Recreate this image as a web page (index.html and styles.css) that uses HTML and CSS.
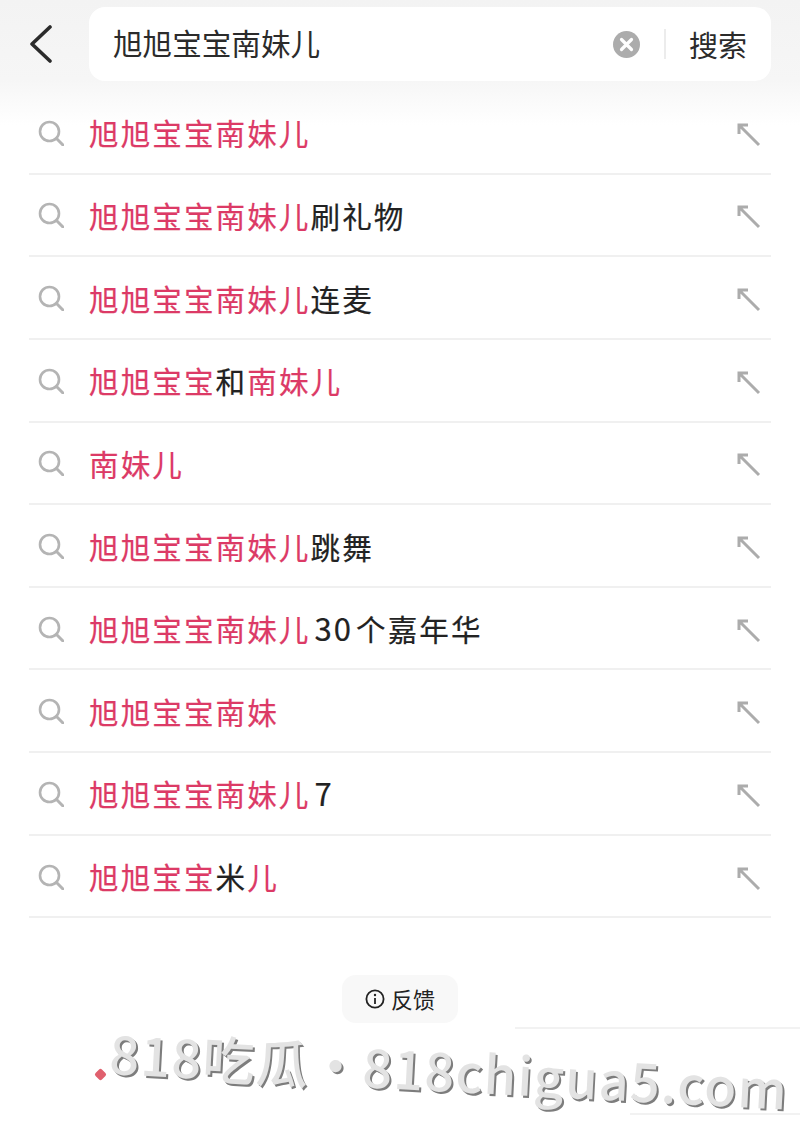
FILE: index.html
```html
<!DOCTYPE html>
<html lang="zh-CN">
<head>
  <meta charset="UTF-8" />
  <title>搜索</title>
  <link rel="stylesheet" href="styles.css">
</head>
<body>
  <svg width="0" height="0" class="defs">
    <symbol id="icon-search" viewBox="0 0 26 26">
      <circle cx="11.5" cy="11.5" r="9.5" fill="none" stroke="currentColor" stroke-width="2.6"/>
      <path d="M18.5 18.5L25 25" fill="none" stroke="currentColor" stroke-width="3" stroke-linecap="round"/>
    </symbol>
    <symbol id="icon-fill" viewBox="0 0 24 24">
      <path d="M2 11V2H11M2 2L22 22" fill="none" stroke="currentColor" stroke-width="3"/>
    </symbol>
  </svg>

  <header class="top-bar">
    <svg class="back" width="24" height="38" viewBox="0 0 24 38">
      <path d="M21 2L3 19L21 36" fill="none" stroke="#2b2b2b" stroke-width="3.6" stroke-linecap="round" stroke-linejoin="round"/>
    </svg>
    <div class="search-box">
      <span class="query">旭旭宝宝南妹儿</span>
      <svg class="clear" width="27" height="27" viewBox="0 0 27 27">
        <circle cx="13.5" cy="13.5" r="13.5" fill="#acacac"/>
        <path d="M8.5 8.5L18.5 18.5M18.5 8.5L8.5 18.5" stroke="#fff" stroke-width="3.2" stroke-linecap="round"/>
      </svg>
      <span class="divider"></span>
      <span class="submit">搜索</span>
    </div>
  </header>

  <ul class="suggest">
    <li><svg class="ic-search"><use href="#icon-search"/></svg><span class="text"><em>旭旭宝宝南妹儿</em></span><svg class="ic-fill"><use href="#icon-fill"/></svg></li>
    <li><svg class="ic-search"><use href="#icon-search"/></svg><span class="text"><em>旭旭宝宝南妹儿</em>刷礼物</span><svg class="ic-fill"><use href="#icon-fill"/></svg></li>
    <li><svg class="ic-search"><use href="#icon-search"/></svg><span class="text"><em>旭旭宝宝南妹儿</em>连麦</span><svg class="ic-fill"><use href="#icon-fill"/></svg></li>
    <li><svg class="ic-search"><use href="#icon-search"/></svg><span class="text"><em>旭旭宝宝</em>和<em>南妹儿</em></span><svg class="ic-fill"><use href="#icon-fill"/></svg></li>
    <li><svg class="ic-search"><use href="#icon-search"/></svg><span class="text"><em>南妹儿</em></span><svg class="ic-fill"><use href="#icon-fill"/></svg></li>
    <li><svg class="ic-search"><use href="#icon-search"/></svg><span class="text"><em>旭旭宝宝南妹儿</em>跳舞</span><svg class="ic-fill"><use href="#icon-fill"/></svg></li>
    <li><svg class="ic-search"><use href="#icon-search"/></svg><span class="text"><em>旭旭宝宝南妹儿</em><span class="num">30</span>个嘉年华</span><svg class="ic-fill"><use href="#icon-fill"/></svg></li>
    <li><svg class="ic-search"><use href="#icon-search"/></svg><span class="text"><em>旭旭宝宝南妹</em></span><svg class="ic-fill"><use href="#icon-fill"/></svg></li>
    <li><svg class="ic-search"><use href="#icon-search"/></svg><span class="text"><em>旭旭宝宝南妹儿</em><span class="num">7</span></span><svg class="ic-fill"><use href="#icon-fill"/></svg></li>
    <li><svg class="ic-search"><use href="#icon-search"/></svg><span class="text"><em>旭旭宝宝</em>米<em>儿</em></span><svg class="ic-fill"><use href="#icon-fill"/></svg></li>
  </ul>

  <div class="feedback-row">
    <div class="feedback">
      <svg width="20" height="20" viewBox="0 0 20 20">
        <circle cx="10" cy="10" r="8.6" fill="none" stroke="#222" stroke-width="1.8"/>
        <path d="M10 9V15" stroke="#222" stroke-width="1.8"/>
        <circle cx="10" cy="6" r="1.2" fill="#222"/>
      </svg>
      <span class="feedback-label">反馈</span>
    </div>
  </div>

  <!-- 水印 -->
  <div class="mark-line mark-line-a"></div>
  <div class="mark-line mark-line-b"></div>
  <div class="mark-dot"></div>
  <div class="watermark">818吃瓜<span class="sep">·</span>818chigua5.com</div>
</body>
</html>
```

FILE: styles.css
```css
* {
  box-sizing: border-box;
}

html, body {
  height: 1132px;
  margin: 0;
  overflow: hidden;
}

body {
  position: relative;
  background: linear-gradient(180deg, #f3f3f3 0, #f6f6f6 80px, #fff 125px) no-repeat;
  background-color: #fff;
  font-family: "Noto Sans CJK SC", "Noto Sans", sans-serif;
  color: #222;
}

.defs {
  position: absolute;
}

.top-bar {
  display: flex;
  align-items: flex-start;
  height: 92px;
  padding: 7px 29px 0 29px;
}

.back {
  margin-top: 18px;
  margin-right: 36px;
  flex: none;
}

.search-box {
  flex: 1;
  display: flex;
  align-items: center;
  height: 74px;
  padding: 0 24px;
  background: #fff;
  border-radius: 16px;
}

.query {
  flex: 1;
  padding-bottom: 4px;
  font-size: 29.6px;
  color: #2b2b2b;
}

.clear {
  margin-right: 24px;
}

.divider {
  width: 2px;
  height: 30px;
  background: #ececec;
  margin-right: 23px;
}

.submit {
  font-size: 29px;
  color: #2b2b2b;
}

.suggest {
  list-style: none;
  margin: 0 29px;
  padding: 0;
}

.suggest li {
  display: flex;
  align-items: center;
  height: 82.65px;
  padding: 0 10px 0 9px;
  border-bottom: 2px solid #f0f0f0;
}

.ic-search {
  width: 26px;
  height: 26px;
  margin-top: 1px;
  margin-right: 25px;
  color: #b4b4b4;
  flex: none;
}

.ic-fill {
  width: 24px;
  height: 24px;
  margin-top: 5px;
  color: #acacac;
  flex: none;
}

.text {
  flex: 1;
  margin-top: 2px;
  font-size: 29.6px;
  line-height: 44px;
  letter-spacing: 2.05px;
  color: #222;
  -webkit-text-stroke: 0.2px currentColor;
  white-space: nowrap;
}

.text em {
  font-style: normal;
  color: #dc3a66;
}

.num {
  margin-left: 4px;
  margin-right: 3px;
  font-size: 31px;
  line-height: 1;
}

.feedback-row {
  display: flex;
  justify-content: center;
  padding-top: 57px;
}

.feedback {
  display: flex;
  align-items: center;
  gap: 6px;
  width: 116px;
  height: 48px;
  padding-left: 23px;
  background: #f8f8f8;
  border-radius: 14px;
  font-size: 22px;
  color: #222;
}

.feedback-label {
  padding-bottom: 3px;
}

/* 水印 */
.watermark {
  position: absolute;
  left: 110px;
  top: 1017px;
  font-size: 52px;
  line-height: 70px;
  font-weight: 500;
  white-space: nowrap;
  letter-spacing: 1.4px;
  color: #e3e3e3;
  text-shadow: 2px 2px 0 #7d7d7d;
  transform: rotate(3deg);
  transform-origin: 0 50%;
}

.sep {
  margin: 0;
}

.mark-dot {
  position: absolute;
  left: 96px;
  top: 1070px;
  width: 9px;
  height: 9px;
  background: #e0606e;
  border-radius: 2px;
  transform: rotate(45deg);
}

.mark-line {
  position: absolute;
  right: 0;
  height: 2px;
  background: #f2f2f2;
}

.mark-line-a {
  top: 1027px;
  width: 285px;
}

.mark-line-b {
  top: 1113px;
  width: 170px;
}
```
